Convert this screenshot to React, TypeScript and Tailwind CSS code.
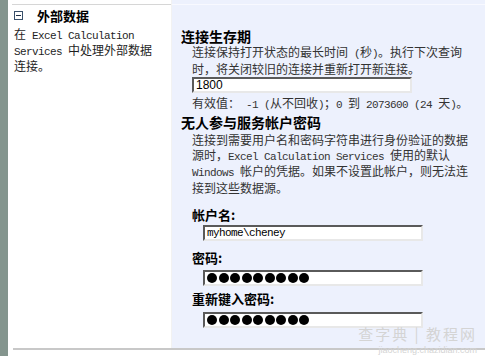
import type { ReactNode } from "react";

const cjk = "font-['Noto_Sans_CJK_SC','Noto_Sans',sans-serif]";

/** SimSun-like half-width runs: every ASCII char 6px wide */
function M({ children }: { children: ReactNode }) {
  return (
    <span className="font-['Liberation_Mono',monospace] text-[11px] tracking-[-0.6px] whitespace-pre">{children}</span>
  );
}

function Box({ children, className = "" }: { children?: ReactNode; className?: string }) {
  return (
    <div
      className={`flex h-[16px] w-[220px] items-center border-2 border-t-[#5a5a5a] border-l-[#5a5a5a] border-b-[#e8e8e8] border-r-[#e8e8e8] bg-white px-[2px] ${className}`}
    >
      {children}
    </div>
  );
}

function Dots() {
  return (
    <div className="flex gap-[1.5px]">
      {Array.from({ length: 9 }).map((_, i) => (
        <div key={i} className="h-[10px] w-[10px] rounded-full bg-black" />
      ))}
    </div>
  );
}

export default function App() {
  return (
    <div className={`relative flex h-[356px] w-[485px] overflow-hidden bg-white text-[12px] text-[#1e1e1e] ${cjk}`}>
      <div className="w-[8px] shrink-0 bg-[#84958e]" />

      <div className="flex flex-1 flex-col">
        <div className="flex h-[348px]">
          {/* left description column */}
          <div className="w-[164px] shrink-0 border-r border-[#f2f2f2] pt-[4px]">
            <div className="ml-[4px] border-t border-[#d6d6d6]" />
            <div className="flex h-[20px] items-center pl-[6px] pt-[1px]">
              <div className="flex h-[9px] w-[9px] items-center justify-center border border-[#39506b] bg-white">
                <div className="h-px w-[5px] bg-[#1f2f45]" />
              </div>
              <span className="ml-[14px] text-[13px] font-bold text-black">外部数据</span>
            </div>
            <div className="mt-[2px] pl-[6px] leading-[14px] whitespace-nowrap">
              在<M> Excel Calculation</M>
              <br />
              <M>Services </M>中处理外部数据
              <br />
              连接。
            </div>
          </div>

          {/* settings column */}
          <div className="flex-1 bg-[#edf1fd] pt-[4px] pl-[9px]">
            <div className="-ml-[9px] border-t border-[#f8f9ff]" />
            <div className="mt-[23px] h-[16px] text-[14px] leading-[16px] font-bold text-black">连接生存期</div>
            <div className="mt-[1px] pl-[11px] whitespace-nowrap text-[#333]">
              <div className="leading-[14.5px]">
                连接保持打开状态的最长时间<M> (</M>秒<M>)</M>。执行下次查询
                <br />
                时，将关闭较旧的连接并重新打开新连接。
              </div>
              <Box className="mt-[1px]">
                <span className="font-['Liberation_Sans',sans-serif] text-[12px] text-black">1800</span>
              </Box>
              <div className="mt-[3px] leading-[14px]">
                有效值：<M> -1 (</M>从不回收<M>)</M>；<M>0 </M>到<M> 2073600 (24 </M>天<M>)</M>。
              </div>
            </div>

            <div className="mt-[2px] h-[16px] text-[14px] leading-[16px] font-bold text-black">无人参与服务帐户密码</div>
            <div className="mt-[3px] pl-[11px] leading-[14.5px] whitespace-nowrap text-[#333]">
              连接到需要用户名和密码字符串进行身份验证的数据
              <br />
              源时，<M>Excel Calculation Services </M>使用的默认
              <br />
              <M>Windows </M>帐户的凭据。如果不设置此帐户，则无法连
              <br />
              接到这些数据源。
            </div>

            <div className="pl-[11px]">
              <div className="mt-[12px] h-[16px] text-[13px] leading-[16px] font-bold text-black">帐户名:</div>
              <Box className="mt-[2px] ml-[11px]">
                <span className="font-['Liberation_Mono',monospace] text-[11px] tracking-[-0.6px] text-black">
                  myhome\cheney
                </span>
              </Box>
              <div className="mt-[9px] h-[16px] text-[13px] leading-[16px] font-bold text-black">密码:</div>
              <Box className="mt-[4px] ml-[11px]">
                <Dots />
              </Box>
              <div className="mt-[5px] h-[16px] text-[13px] leading-[16px] font-bold text-black">重新键入密码:</div>
              <Box className="mt-[5px] ml-[11px]">
                <Dots />
              </Box>
            </div>
          </div>
        </div>
        <div className="ml-[5px] h-[2px] bg-[#c8c8c8]" />
        <div className="flex-1 bg-white" />
      </div>

      {/* watermark */}
      <div className="pointer-events-none absolute right-[8px] bottom-0 flex flex-col items-end text-[#d4d4d4]">
        <span className="text-[15px] leading-[22px] tracking-[2px]">查字典 | 教程网</span>
        <span className="font-['Liberation_Sans',sans-serif] text-[9px] leading-[11px]">jiaocheng.chazidian.com</span>
      </div>
    </div>
  );
}
